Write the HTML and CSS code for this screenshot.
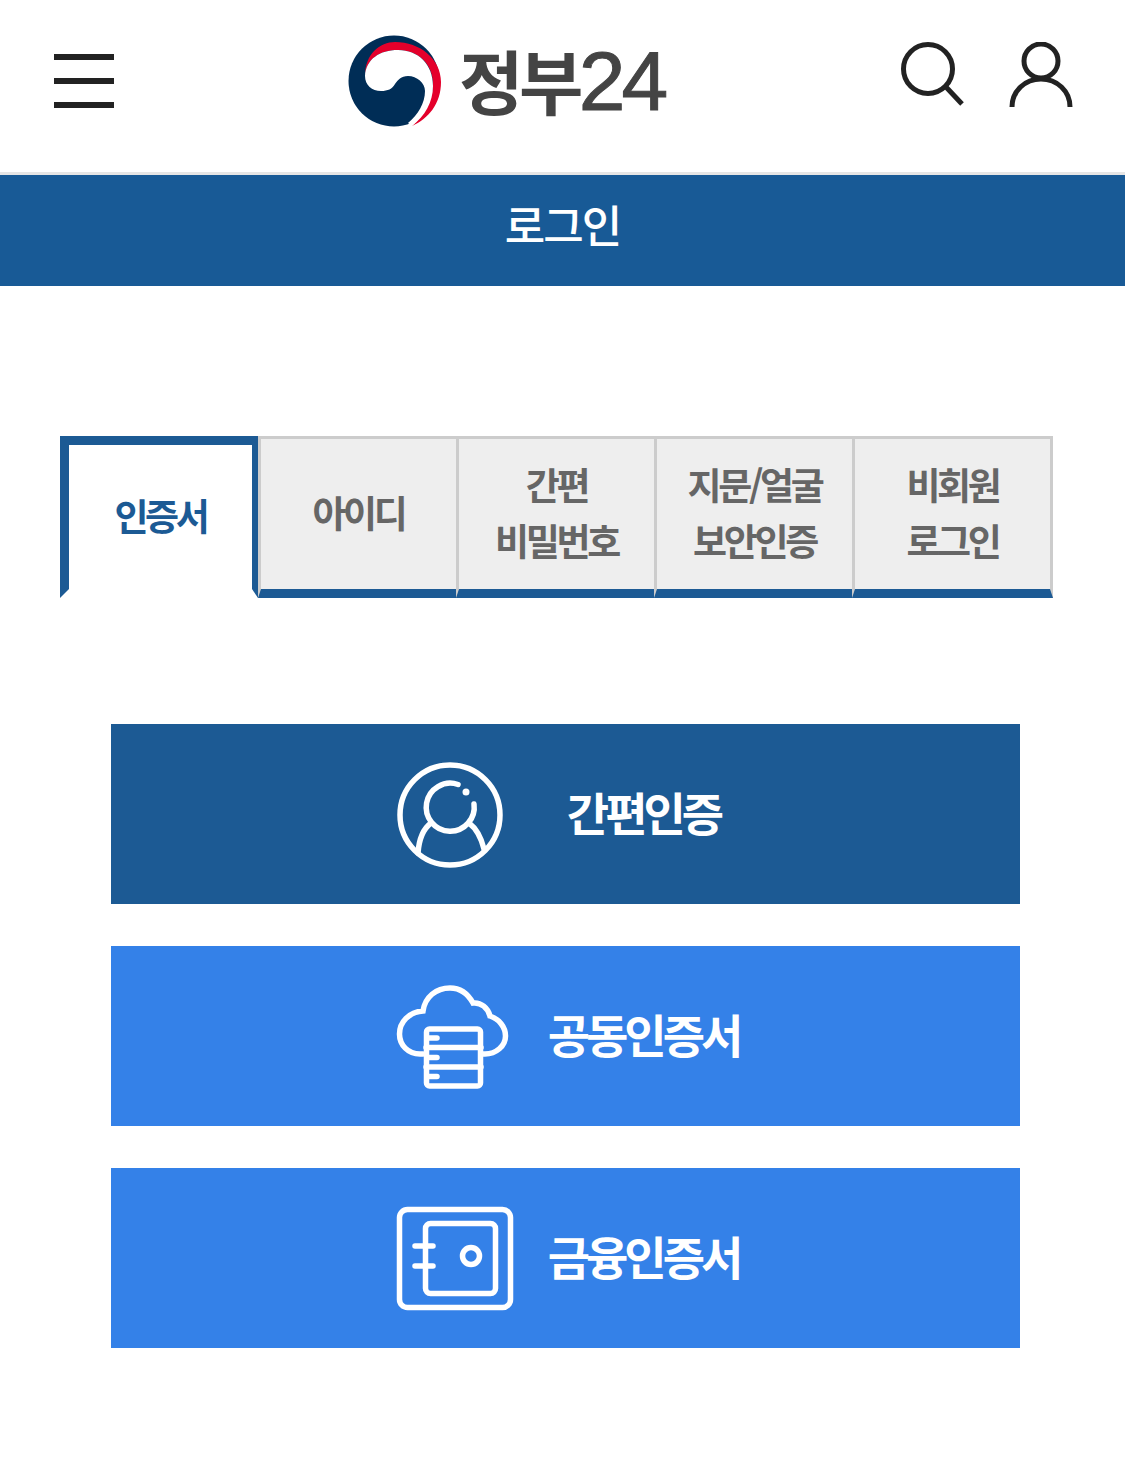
FILE: index.html
```html
<!DOCTYPE html>
<html lang="ko">
<head>
<meta charset="utf-8">
<title>정부24 로그인</title>
<link rel="stylesheet" href="styles.css">
</head>
<body>
<header class="top">
  <div class="burger"><span></span><span></span><span></span></div>
  <div class="logo">
    <svg class="emblem" viewBox="347 36 96 92" width="96" height="92">
      <circle cx="394" cy="82" r="45.5" fill="#002d56"/>
      <path d="M365 77C365 55 380 43 395 43C420 43 441 60 441 83C441 105 428 120 412 127C425 115 433 100 433 85C433 65 418 51 398 51C380 51 366 60 365 77Z" fill="#e4002b"/>
      <path d="M365 77C366 60 380 51 398 51C418 51 433 65 433 87C433 103 425 117 412 127L408 124C418 116 425 104 425 92C425 84 417 77 408 77C401 77 398 81 395 85C392 90 388 92 381 92C372 92 365 86 365 77Z" fill="#fff"/>
    </svg>
    <div class="logo-text"><span class="logo-ko">정부</span><span class="logo-num">24</span></div>
  </div>
  <div class="tools">
    <svg viewBox="0 0 66 66" width="66" height="66" class="tool">
      <circle cx="28" cy="27" r="24.5" fill="none" stroke="#222" stroke-width="5"/>
      <path d="M46 45L62 62" stroke="#222" stroke-width="5" fill="none"/>
    </svg>
    <svg viewBox="0 0 66 66" width="66" height="66" class="tool">
      <circle cx="33" cy="19" r="17" fill="none" stroke="#222" stroke-width="5"/>
      <path d="M4 65C4 49 17 37 33 37C49 37 62 49 62 65" fill="none" stroke="#222" stroke-width="5"/>
    </svg>
  </div>
</header>
<h1 class="title">로그인</h1>
<ul class="tabs">
  <li class="tab active">인증서</li>
  <li class="tab">아이디</li>
  <li class="tab">간편<br>비밀번호</li>
  <li class="tab">지문/얼굴<br>보안인증</li>
  <li class="tab last">비회원<br>로그인</li>
</ul>
<div class="actions">
  <a class="act act-dark">
    <span class="ico">
      <svg viewBox="0 0 116 110" width="116" height="110" class="line">
        <circle cx="55" cy="54" r="50"/>
        <path d="M63 23.500A24 24 0 1 0 79 43"/>
        <circle cx="71" cy="31" r="3.500" class="dot"/>
        <path d="M23 92C24 78 28 68 36 62M89 88C86 76 82 68 74 62"/>
      </svg>
    </span>
    <span class="lbl">간편인증</span>
  </a>
  <a class="act">
    <span class="ico">
      <svg viewBox="0 0 116 110" width="116" height="110" class="line">
        <path d="M28 71H25C13 71 4.500 62 4.500 51C4.500 39 14 29 28 28C30 14 41 5 55 5C65 5 73 11 78 20C86 19 93 25 95 33C104 36 110.500 44 110.500 53C110.500 63 101 71 90 71H88"/>
        <rect x="31.5" y="46" width="54" height="57" rx="3"/>
        <path d="M31 64.500H86M31 84H86M34 55H42M34 74.500H42M34 93.500H42"/>
      </svg>
    </span>
    <span class="lbl">공동인증서</span>
  </a>
  <a class="act">
    <span class="ico">
      <svg viewBox="0 0 120 110" width="120" height="110" class="line">
        <rect x="4.500" y="4.500" width="111" height="98" rx="8"/>
        <rect x="30.500" y="18.500" width="70" height="70" rx="5"/>
        <path d="M20 41H38M20 61H38"/>
        <circle cx="76" cy="51" r="8.500"/>
      </svg>
    </span>
    <span class="lbl">금융인증서</span>
  </a>
</div>
</body>
</html>
```
FILE: styles.css
```css
* { box-sizing: border-box; }
html, body { margin: 0; padding: 0; background: #fff; }
body { font-family: "Noto Sans CJK KR", "Noto Sans", sans-serif; }

.top {
  height: 175px;
  border-bottom: 3px solid #e5e5e5;
  display: flex;
  align-items: center;
  padding: 0 51px 10px 54px;
}
.burger {
  width: 60px;
  height: 54px;
  display: flex;
  flex-direction: column;
  justify-content: space-between;
  margin-right: 233px;
}
.burger span { display: block; height: 6px; background: #222; }
.logo { display: flex; align-items: center; }
.emblem { display: block; margin-right: 16px; }
.logo-text {
  display: flex;
  align-items: baseline;
  line-height: 92px;
  color: #444;
  margin-top: -2px;
}
.logo-ko {
  font-size: 70px;
  font-weight: 700;
  letter-spacing: -4.5px;
}
.logo-num {
  font-family: "Liberation Sans", sans-serif;
  font-size: 84px;
  letter-spacing: -4px;
  -webkit-text-stroke: 1px #444;
}
.tools { margin-left: auto; display: flex; gap: 42px; margin-top: -12px; }
.tool { display: block; }

.title {
  margin: 0;
  height: 111px;
  background: #185a96;
  color: #fff;
  font-size: 44px;
  font-weight: 500;
  letter-spacing: -2px;
  line-height: 98px;
  text-align: center;
}

.tabs {
  list-style: none;
  margin: 150px 0 0 60px;
  padding: 0;
  display: flex;
  height: 162px;
}
.tab {
  width: 198px;
  display: flex;
  align-items: center;
  justify-content: center;
  text-align: center;
  background: #eee;
  border-style: solid;
  border-color: #ccc;
  border-width: 3px 0 9px 3px;
  border-bottom-color: #1c5a94;
  padding-bottom: 4px;
  color: #666;
  font-size: 37px;
  font-weight: 700;
  letter-spacing: -3.3px;
  line-height: 56px;
}
.tab.last { width: 201px; border-right-width: 3px; }
.tab.active {
  background: #fff;
  border-color: #1c5a94;
  border-width: 9px 6px 9px 9px;
  border-bottom-color: #fff;
  color: #1c5a94;
}

.actions {
  margin: 126px 0 0 111px;
  width: 909px;
  display: flex;
  flex-direction: column;
  gap: 42px;
}
.act {
  height: 180px;
  background: #3481e8;
  display: flex;
  align-items: center;
  padding-left: 284px;
  color: #fff;
}
.act-dark { background: #1c5a94; }
.ico { width: 132px; display: block; padding-top: 3px; }
.line { display: block; fill: none; stroke: #fff; stroke-width: 5.5; stroke-linecap: round; }
.line .dot { fill: #fff; stroke: none; }
.lbl {
  width: 233px;
  text-align: center;
  font-size: 46px;
  font-weight: 700;
  letter-spacing: -4px;
  line-height: 60px;
  margin-top: -7px;
}
```
